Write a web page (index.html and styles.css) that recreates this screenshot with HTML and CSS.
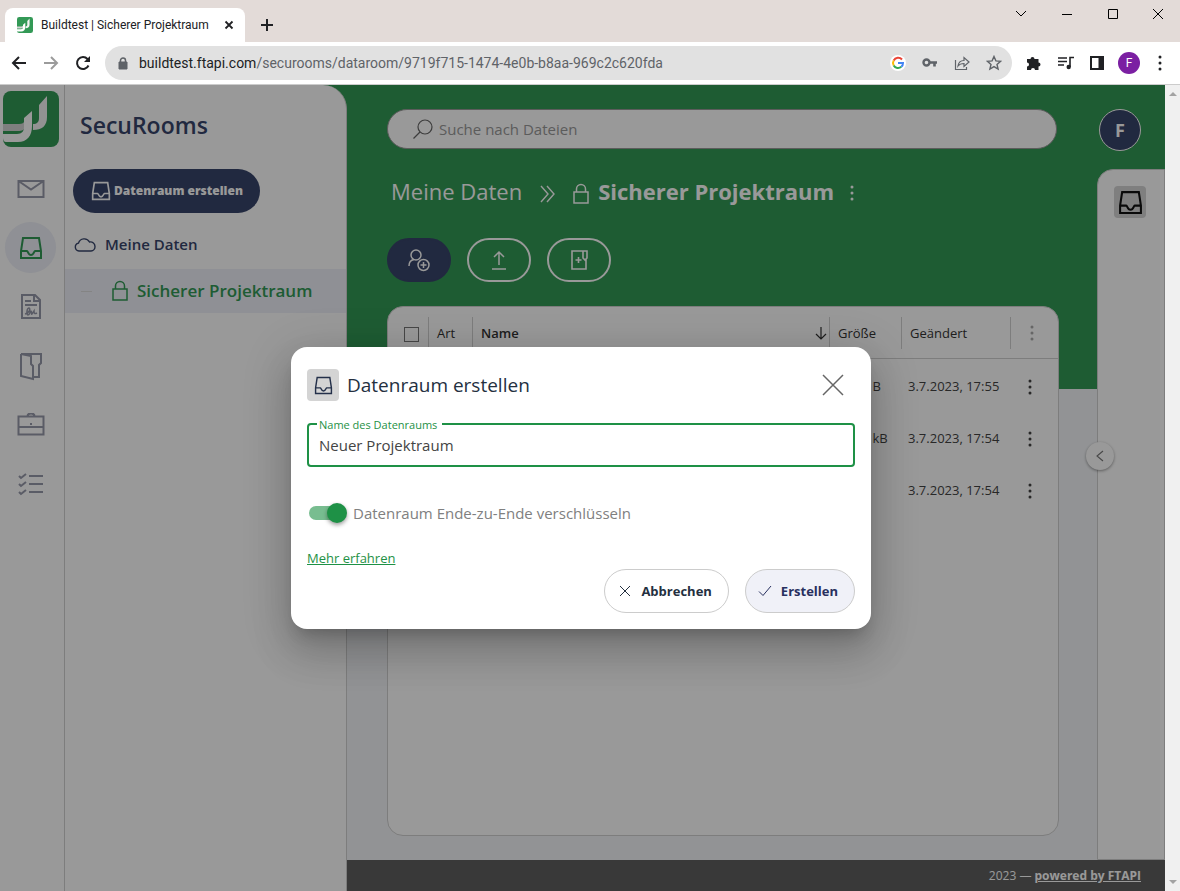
FILE: index.html
```html
<!DOCTYPE html>
<html lang="de">
<head>
<meta charset="utf-8">
<title>Buildtest | Sicherer Projektraum</title>
<link rel="stylesheet" href="styles.css">
</head>
<body>
<svg class="defs" aria-hidden="true">
  <symbol id="inbox" viewBox="0 0 24 24"><path d="M4 2h16l2 13v7H2v-7z M2 15h6c1 0 1 4 4 4s3-4 4-4h6"/></symbol>
  <symbol id="lock" viewBox="0 0 18 22"><path d="M2 9h14v11H2zM4.500 9V6a4.500 4.500 0 0 1 9 0v3"/></symbol>
  <symbol id="dots" viewBox="0 0 4 16"><g fill="currentColor" stroke="none"><circle cx="2" cy="2" r="1.500"/><circle cx="2" cy="8" r="1.500"/><circle cx="2" cy="14" r="1.500"/></g></symbol>
  <symbol id="logo" viewBox="0 0 56 56"><g stroke="none">
    <rect width="56" height="56" rx="8" fill="#339956"/>
    <path d="M30 39v-6c4 0 6-2 6-6V14l8-9v21c0 9-5 13-14 13z" fill="#f4f4f4"/>
    <path d="M0 33h16c3 0 5-1 6-4v6c0 4-3 5-7 5H0z" fill="#d4d4d4"/>
    <path d="M0 43h14c5 0 7-3 7-7v-9l8-7v15c0 10-5 16-14 16H3c-2 0-3-2-3-4z" fill="#fff"/>
  </g></symbol>
</svg>

<header class="browser">
  <div class="tabstrip">
    <div class="tab">
      <svg class="favicon"><use href="#logo"/></svg>
      <span class="tab-title">Buildtest | Sicherer Projektraum</span>
      <button class="bare" aria-label="Tab schließen"><svg width="10" height="10" viewBox="0 0 10 10" stroke-width="1.800"><path d="M1.500 1.500l7 7M8.500 1.500l-7 7"/></svg></button>
    </div>
    <button class="bare new-tab" aria-label="Neuer Tab"><svg width="14" height="14" viewBox="0 0 14 14" stroke-width="2"><path d="M7 1v12M1 7h12"/></svg></button>
    <div class="window-controls">
      <button class="bare" aria-label="Tabs suchen"><svg width="12" height="12" viewBox="0 0 12 12"><path d="M1 3l5 5 5-5"/></svg></button>
      <button class="bare" aria-label="Minimieren"><svg width="12" height="12" viewBox="0 0 12 12"><path d="M1 6.500h10"/></svg></button>
      <button class="bare" aria-label="Maximieren"><svg width="12" height="12" viewBox="0 0 12 12"><path d="M1.500 1.500h9v9h-9z"/></svg></button>
      <button class="bare" aria-label="Schließen"><svg width="12" height="12" viewBox="0 0 12 12"><path d="M1 1l10 10M11 1L1 11"/></svg></button>
    </div>
  </div>
  <div class="toolbar">
    <button class="bare" aria-label="Zurück"><svg width="16" height="16" viewBox="0 0 16 16" stroke-width="2"><path d="M15 8H2M8 2L2 8l6 6"/></svg></button>
    <button class="bare muted" aria-label="Vorwärts"><svg width="16" height="16" viewBox="0 0 16 16" stroke-width="2"><path d="M1 8h13M8 2l6 6-6 6"/></svg></button>
    <button class="bare" aria-label="Neu laden"><svg width="16" height="16" viewBox="0 0 16 16" stroke-width="2"><path d="M13.500 10.500A6 6 0 1 1 12.500 4L14 5.500"/><path d="M15 1v6H9z" fill="currentColor" stroke="none"/></svg></button>
    <div class="omnibox">
      <svg class="grey" width="10" height="13" viewBox="0 0 10 13"><path d="M1 5h8v7H1z" fill="currentColor"/><path d="M2.500 5V3.500a2.500 2.500 0 0 1 5 0V5" stroke-width="1.500"/></svg>
      <span class="url">buildtest.ftapi.com<span class="path">/securooms/dataroom/9719f715-1474-4e0b-b8aa-969c2c620fda</span></span>
      <div class="omni-icons grey">
        <svg width="16" height="16" viewBox="0 0 16 16" stroke-width="2"><circle cx="8" cy="8" r="8" fill="#fff" stroke="none"/><path d="M12 4.500A5 5 0 0 0 3.700 5.500" stroke="#ea4335"/><path d="M3.700 5.500a5 5 0 0 0 0 5" stroke="#fbbc05"/><path d="M3.700 10.500a5 5 0 0 0 7.600 1.300" stroke="#34a853"/><path d="M8 8h5c0 1.600-.7 3-1.700 3.800" stroke="#4285f4"/></svg>
        <svg width="16" height="16" viewBox="0 0 16 16"><circle cx="4.500" cy="7.500" r="3" stroke-width="2.400"/><path d="M7.500 7.500h7.500M12.500 7.500v4" stroke-width="2.600"/></svg>
        <svg width="16" height="16" viewBox="0 0 16 16" stroke-width="1.200"><path d="M1.500 5v9.500h11V12M4 11c.5-4 3-5.500 6-5.500V2.500l5 4.500-5 4.500V8.500C7.500 8.500 5.500 9 4 11z"/></svg>
        <svg width="16" height="16" viewBox="0 0 16 16" stroke-width="1.400"><path d="M8 1.500l1.900 4.400 4.700.4-3.600 3.100 1.100 4.700L8 11.600l-4.100 2.500L5 9.400 1.400 6.300l4.700-.4z"/></svg>
      </div>
    </div>
    <div class="extensions">
      <svg width="16" height="16" viewBox="0 0 16 16"><path d="M1 4h3.500a2 2 0 1 1 4 0h4v3.500a2 2 0 1 1 0 4V15H9a2 2 0 0 0-4 0H1v-3.500a2 2 0 0 0 0-4z" fill="currentColor" stroke="none"/></svg>
      <svg width="16" height="16" viewBox="0 0 16 16" stroke-width="1.600"><path d="M0 3h9M0 6.500h9M0 10h6M12 12V2.500h4"/><circle cx="10.700" cy="12" r="2.200" fill="currentColor" stroke="none"/></svg>
      <svg width="14" height="14" viewBox="0 0 14 14"><path d="M1 1h12v12H1z" stroke-width="2"/><path d="M9 1h4v12H9z" fill="currentColor"/></svg>
      <span class="profile">F</span>
      <svg width="4" height="16"><use href="#dots"/></svg>
    </div>
  </div>
</header>

<div class="viewport">
  <div class="app">
    <nav class="rail" aria-label="Module">
      <svg class="brand"><use href="#logo"/></svg>
      <button class="rail-item" aria-label="Nachrichten"><svg width="28" height="20" viewBox="0 0 28 20"><path d="M1.500 2h25v16h-25zM1.500 2L14 10.500 26.500 2"/></svg></button>
      <button class="rail-item active" aria-label="SecuRooms"><svg width="24" height="24"><use href="#inbox"/></svg></button>
      <button class="rail-item" aria-label="Formulare"><svg width="22" height="28" viewBox="0 0 22 28"><path d="M2 2h13l5 5v18H2zM14 2v6h6M5 8h6M5 12h12"/><path d="M5 21c4-1 6-5 4-6-2 0-3 6-1 7 2 0 2-4 3-4s0 4 1 3l2-3c0 3 1 3 3 2" stroke-width="1.500"/></svg></button>
      <button class="rail-item" aria-label="Ordner"><svg width="24" height="30" viewBox="0 0 24 30"><path d="M2 3h20v9l-2 2v12h-5M2 3v22l12 3V15l-2-2V5L2 3"/></svg></button>
      <button class="rail-item" aria-label="Aufträge"><svg width="28" height="24" viewBox="0 0 28 24"><path d="M1.500 3.500h25v18h-25zM1.500 14h25M10.500 3a3.500 2.500 0 0 1 7 0M14 10v2"/></svg></button>
      <button class="rail-item" aria-label="Aufgaben"><svg width="26" height="24" viewBox="0 0 26 24"><path d="M1 4l2 2 5-4M1 12l2 2 5-4M1 20l2 2 5-4M11 4h14M11 12h14M11 20h14"/></svg></button>
    </nav>

    <aside class="sidebar">
      <h1>SecuRooms</h1>
      <button class="create"><svg width="20" height="20"><use href="#inbox"/></svg>Datenraum erstellen</button>
      <a class="tree root" href="#"><svg width="22" height="15" viewBox="0 0 22 15" stroke-width="1.400"><path d="M5 14a4 4 0 0 1-.5-7.900A6 6 0 0 1 15.500 5c3-.5 5.500 1.500 5.500 4.500a4.300 4.300 0 0 1-4 4.500z"/></svg>Meine Daten</a>
      <a class="tree child" href="#"><i class="branch"></i><svg width="18" height="22" stroke-width="1.500"><use href="#lock"/></svg>Sicherer Projektraum</a>
    </aside>

    <div class="stage">
      <div class="columns">
        <main>
          <label class="search"><svg width="20" height="20" viewBox="0 0 20 20" stroke-width="1.200"><circle cx="12" cy="8" r="7"/><path d="M7 13l-6.500 6.500"/></svg><input type="search" placeholder="Suche nach Dateien" aria-label="Suche nach Dateien"></label>
          <div class="crumbs">
            <a href="#">Meine Daten</a>
            <svg width="16" height="18" viewBox="0 0 16 18" stroke-width="1.400"><path d="M1 1l7 8-7 8M7 1l7 8-7 8"/></svg>
            <svg width="18" height="22" stroke-width="1.500"><use href="#lock"/></svg>
            <h2>Sicherer Projektraum</h2>
            <button class="bare" aria-label="Mehr"><svg width="4" height="16"><use href="#dots"/></svg></button>
          </div>
          <div class="actions">
            <button class="pill solid" aria-label="Benutzer hinzufügen"><svg width="24" height="24" viewBox="0 0 24 24" stroke-width="1.500"><circle cx="9" cy="7" r="5"/><path d="M2 18c0-4 2-6 5-6.500"/><circle cx="16.500" cy="17" r="5.500"/><path d="M16.500 14v6M13.500 17h6"/></svg></button>
            <button class="pill" aria-label="Hochladen"><svg width="20" height="20" viewBox="0 0 20 20" stroke-width="1.500"><path d="M10 15V2M5 7l5-5 5 5M3 19h14"/></svg></button>
            <button class="pill" aria-label="Ordner anlegen"><svg width="20" height="22" viewBox="0 0 20 22" stroke-width="1.600"><path d="M17 10v10H3V2h15v7l-2 2-2-2V2M9.500 8v6M6.500 11h6"/></svg></button>
          </div>
          <div class="card">
            <table>
              <colgroup><col class="c-check"><col class="c-type"><col><col class="c-size"><col class="c-date"><col class="c-menu"></colgroup>
              <thead><tr>
                <th><input type="checkbox" class="check" aria-label="Alle auswählen"></th>
                <th><div class="medium">Art</div></th>
                <th><div class="sorted">Name <svg width="12" height="14" viewBox="0 0 12 14" stroke-width="1.200"><path d="M6 1v12M1 8l5 5 5-5"/></svg></div></th>
                <th><div class="medium">Größe</div></th>
                <th><div class="medium">Geändert</div></th>
                <th><div class="menu faint"><svg width="4" height="16"><use href="#dots"/></svg></div></th>
              </tr></thead>
              <tbody>
                <tr><td></td><td></td><td></td><td>1.157 B</td><td>3.7.2023, 17:55</td><td><button class="bare" aria-label="Optionen"><svg width="4" height="16"><use href="#dots"/></svg></button></td></tr>
                <tr><td></td><td></td><td></td><td>127,4 kB</td><td>3.7.2023, 17:54</td><td><button class="bare" aria-label="Optionen"><svg width="4" height="16"><use href="#dots"/></svg></button></td></tr>
                <tr><td></td><td></td><td></td><td></td><td>3.7.2023, 17:54</td><td><button class="bare" aria-label="Optionen"><svg width="4" height="16"><use href="#dots"/></svg></button></td></tr>
              </tbody>
            </table>
          </div>
        </main>
        <div class="right">
          <button class="avatar">F</button>
          <div class="panel">
            <button class="tile" aria-label="Details"><svg width="25" height="25"><use href="#inbox"/></svg></button>
            <button class="knob" aria-label="Ausklappen"><svg width="8" height="12" viewBox="0 0 8 12" stroke-width="1.100"><path d="M7 1L1 6l6 5"/></svg></button>
          </div>
        </div>
      </div>
      <footer>2023 — <a href="#">powered by FTAPI</a></footer>
    </div>

    <div class="backdrop">
      <section class="dialog" role="dialog" aria-labelledby="dlg-title">
        <div class="dialog-head">
          <span class="tile light"><svg width="19" height="19"><use href="#inbox"/></svg></span>
          <h3 id="dlg-title">Datenraum erstellen</h3>
          <button class="bare close" aria-label="Schließen"><svg width="22" height="22" viewBox="0 0 22 22" stroke-width="1.500"><path d="M1 1l20 20M21 1L1 21"/></svg></button>
        </div>
        <div class="field">
          <input id="room" type="text" value="Neuer Projektraum">
          <label for="room">Name des Datenraums</label>
        </div>
        <label class="switch"><input type="checkbox" checked>Datenraum Ende-zu-Ende verschlüsseln</label>
        <a class="more" href="#">Mehr erfahren</a>
        <div class="buttons">
          <button class="cancel"><svg width="12" height="12" viewBox="0 0 12 12"><path d="M1 1l10 10M11 1L1 11"/></svg>Abbrechen</button>
          <button class="confirm"><svg width="14" height="12" viewBox="0 0 14 12"><path d="M1 6.500l4 4L13 1"/></svg>Erstellen</button>
        </div>
      </section>
    </div>
  </div>
  <div class="scrollbar"><i class="up"></i><i class="down"></i></div>
</div>
</body>
</html>
```

FILE: styles.css
```css
:root {
  --green: #1e9146;
  --stage-green: #339956;
  --navy: #38456b;
  --line: #d0d0d0;
  --ui: "Open Sans", "Noto Sans", sans-serif;
}
* { box-sizing: border-box; }
body {
  margin: 0;
  min-height: 100vh;
  display: flex;
  flex-direction: column;
  font: 13px/20px var(--ui);
  color: #333;
}
svg { fill: none; stroke: currentColor; flex: none; display: block; }
.defs { position: absolute; width: 0; height: 0; }
button { font: inherit; color: inherit; padding: 0; border: 0; cursor: pointer; }
.bare { background: none; display: grid; place-items: center; }
h1, h2, h3 { margin: 0; }
a { color: inherit; }

/* browser frame */
.browser { color: #202124; border-bottom: 1px solid #ccc; font-family: Roboto, "Open Sans", sans-serif; }
.tabstrip { height: 42px; background: #e3dbd8; display: flex; align-items: flex-end; padding-left: 5px; }
.tab {
  width: 240px; height: 34px; padding: 0 11px 0 12px;
  display: flex; align-items: center; gap: 8px;
  background: #fff; border-radius: 8px 8px 0 0;
  font-size: 12px;
}
.favicon { width: 16px; height: 16px; }
.tab-title { flex: 1; white-space: nowrap; }
.new-tab { width: 44px; height: 34px; }
.window-controls { margin-left: auto; align-self: flex-start; display: flex; height: 28px; color: #000; }
.window-controls button { width: 46px; }
.window-controls button:last-child { width: 44px; }
.toolbar { height: 42px; background: #fff; display: flex; align-items: center; gap: 16px; padding: 0 18px 0 11px; }
.muted { color: #9b9b9b; }
.grey { color: #5f6368; }
.omnibox {
  flex: 1; min-width: 0; height: 34px; border-radius: 17px; background: #e1e1e1;
  display: flex; align-items: center; gap: 11px; padding: 0 10px 0 13px; margin-left: -2px;
}
.url { flex: 1; font-size: 14px; white-space: nowrap; overflow: hidden; color: #202124; }
.path { color: #5f6368; }
.omni-icons { display: flex; gap: 16px; }
.extensions { display: flex; align-items: center; gap: 16px; margin-left: -2px; }
.profile {
  width: 22px; height: 22px; margin: 0 2px 0 -2px; border-radius: 50%; background: #7b1fa2; color: #fff;
  font-size: 12px; line-height: 22px; text-align: center;
}

/* page */
.viewport { flex: 1; display: flex; }
.app {
  flex: 1; min-width: 0; display: flex; position: relative;
  background: linear-gradient(var(--stage-green) 304px, #f4f6f9 304px);
}
.scrollbar {
  width: 15px; background: #f0f0f0;
  display: flex; flex-direction: column; justify-content: space-between; align-items: center; padding: 7px 0;
}
.scrollbar i { border: 4px solid transparent; }
.scrollbar .up { border-top: 0; border-bottom-color: #a3a3a3; }
.scrollbar .down { border-bottom: 0; border-top-color: #a3a3a3; }

.rail {
  width: 65px; padding: 6px 8px 0 5px; background: #fff; border-right: 1px solid var(--line);
  display: flex; flex-direction: column; gap: 8px;
}
.brand { width: 56px; height: 56px; margin: 0 0 8px -2px; }
.rail-item {
  height: 51px; border-radius: 50%; background: none; color: #9799aa;
  display: grid; place-items: center;
}
.rail-item.active { background: #eef0f8; color: var(--stage-green); }
.rail-item svg { stroke-width: 2; }

.sidebar {
  width: 282px; background: #fff; border-right: 1px solid var(--line); border-radius: 0 24px 0 0;
  display: flex; flex-direction: column; align-items: stretch; color: var(--navy);
}
.sidebar h1 { font-size: 23px; line-height: 32px; font-weight: 600; padding: 24px 15px 28px; }
.create {
  align-self: flex-start; height: 44px; margin: 0 8px 10px; padding: 0 17px 0 18px; border-radius: 22px;
  background: var(--navy); color: #fff; font-weight: 800; font-size: 12px;
  display: flex; align-items: center; gap: 3px;
}
.create svg { stroke-width: 2; }
.tree { height: 44px; display: flex; align-items: center; text-decoration: none; font-weight: 600; }
.root { font-size: 15px; gap: 9px; padding: 0 0 2px 9px; margin-bottom: 2px; }
.child { font-size: 17px; gap: 8px; padding-left: 16px; background: #eef1f8; color: var(--stage-green); }
.branch { width: 11px; height: 1px; background: #ddd; margin-right: 11px; }

.stage { flex: 1; min-width: 0; display: flex; flex-direction: column; }
.columns { flex: 1; display: flex; }
main { flex: 1; min-width: 0; padding: 24px 38px 24px 40px; display: flex; flex-direction: column; gap: 24px; }
.search {
  height: 40px; margin-right: 2px; border: 1px solid #999; border-radius: 20px; background: #fff;
  display: flex; align-items: center; gap: 6px; padding: 0 25px; color: #666;
}
.search input { flex: 1; border: 0; outline: 0; background: none; font: 15px/20px var(--ui); padding: 0; }
.search input::placeholder { color: #999; }
.crumbs { height: 41px; display: flex; align-items: center; gap: 16px; padding: 0 4px; color: #fff; font-size: 22px; line-height: 32px; }
.crumbs a { text-decoration: none; padding: 0 2px 5px 0; }
.crumbs h2 { font-size: 22px; font-weight: 700; margin: 0 0 0 -8px; padding-bottom: 5px; }
.crumbs button { padding-bottom: 2px; }
.actions { display: flex; gap: 16px; }
.pill {
  width: 64px; height: 44px; border-radius: 22px; border: 2px solid #fff; background: none; color: #fff;
  display: grid; place-items: center;
}
.pill.solid { background: var(--navy); border-color: var(--navy); }
.card { flex: 1; background: #fff; border: 1px solid var(--line); border-radius: 16px; }

table { width: 100%; table-layout: fixed; border-collapse: collapse; }
.c-check { width: 40px; }
.c-type { width: 44px; }
.c-size { width: 72px; }
.c-date { width: 109px; }
.c-menu { width: 48px; }
th { height: 52px; padding: 0; text-align: left; box-shadow: inset 0 -1px var(--line); font-weight: 600; font-size: 13px; }
th > div { height: 32px; line-height: 32px; padding-left: 8px; border-left: 1px solid var(--line); }
th .medium { font-weight: 500; }
.sorted { display: flex; justify-content: space-between; align-items: center; padding-right: 2px; }
.check { appearance: none; display: block; width: 15px; height: 15px; margin: 2px 0 0 16px; border: 1px solid #777; }
.menu { display: flex; align-items: center; padding-left: 19px; }
.faint { color: #aaa; }
td { height: 52px; padding: 2px 0 0 7px; white-space: nowrap; color: #444; }
td .bare { margin: 2px 0 0 11px; }

.right { width: 68px; display: flex; flex-direction: column; }
.avatar {
  width: 42px; height: 42px; margin: 24px 0 18px 2px; border: 1px solid #fff; border-radius: 50%;
  background: var(--navy); color: #fff; font-weight: 700; font-size: 18px;
}
.panel {
  flex: 1; position: relative; background: #fff; border: 1px solid var(--line);
  border-radius: 16px 0 0 0; padding: 16px;
}
.tile { width: 32px; height: 32px; border-radius: 4px; background: #d4d4d4; color: #111; display: grid; place-items: center; }
.tile svg { stroke-width: 2; }
.light { color: #24304a; }
.light svg { stroke-width: 1.800; }
.knob {
  position: absolute; left: -12px; top: 272px; width: 28px; height: 28px; border-radius: 50%;
  background: #fff; color: #777; display: grid; place-items: center; box-shadow: 0 1px 3px #0006;
}
footer { height: 31px; padding-right: 24px; background: #606060; color: #fff; text-align: right; font-size: 12px; line-height: 31px; }
footer a { font-weight: 700; }

/* dialog */
.backdrop { position: absolute; inset: 0; padding-right: 3px; display: flex; align-items: center; justify-content: center; background: rgba(0, 0, 0, .4); }
.dialog {
  width: 580px; max-width: 100%; padding: 22px 16px 16px; border-radius: 16px; background: #fff;
  box-shadow: 0 11px 15px -7px rgba(0,0,0,.2), 0 24px 38px 3px rgba(0,0,0,.14), 0 9px 46px 8px rgba(0,0,0,.12);
  display: flex; flex-direction: column; align-items: stretch;
}
.dialog-head { display: flex; align-items: center; gap: 8px; }
.dialog h3 { flex: 1; font-size: 19px; line-height: 32px; font-weight: 400; color: #24303f; }
.close { width: 44px; height: 32px; color: #666; }
.field { position: relative; margin-top: 22px; }
.field input {
  display: block; width: 100%; height: 44px; padding: 0 10px; border: 2px solid var(--green); border-radius: 4px;
  outline: 0; font: 15px/20px var(--ui); color: #444;
}
.field label {
  position: absolute; left: 10px; top: -6px; padding: 0 5px 0 2px; background: #fff;
  color: var(--green); font-size: 11px; line-height: 16px;
}
.switch { display: flex; align-items: center; gap: 10px; margin: 34px 0 0 2px; height: 24px; font-size: 15px; color: #808080; }
.switch input {
  appearance: none; display: flex; align-items: center; justify-content: flex-end;
  width: 34px; height: 14px; margin: 0; background: #78bd90; border-radius: 7px;
}
.switch input::before {
  content: ""; flex: none; width: 20px; height: 20px; margin-right: -4px; border-radius: 50%;
  background: var(--green); box-shadow: 0 2px 4px #0006;
}
.more { align-self: flex-start; margin-top: 23px; margin-bottom: 1px; line-height: 20px; color: var(--green); }
.buttons { display: flex; justify-content: flex-end; gap: 16px; }
.buttons button {
  height: 44px; padding: 0 16px 0 14px; border: 1px solid #ccc; border-radius: 22px; background: #fff;
  color: #24303f; font-weight: 700; display: flex; align-items: center; gap: 10px;
}
.buttons .confirm { padding-left: 12px; gap: 9px; background: #f0f1f8; color: #28305f; }
```
